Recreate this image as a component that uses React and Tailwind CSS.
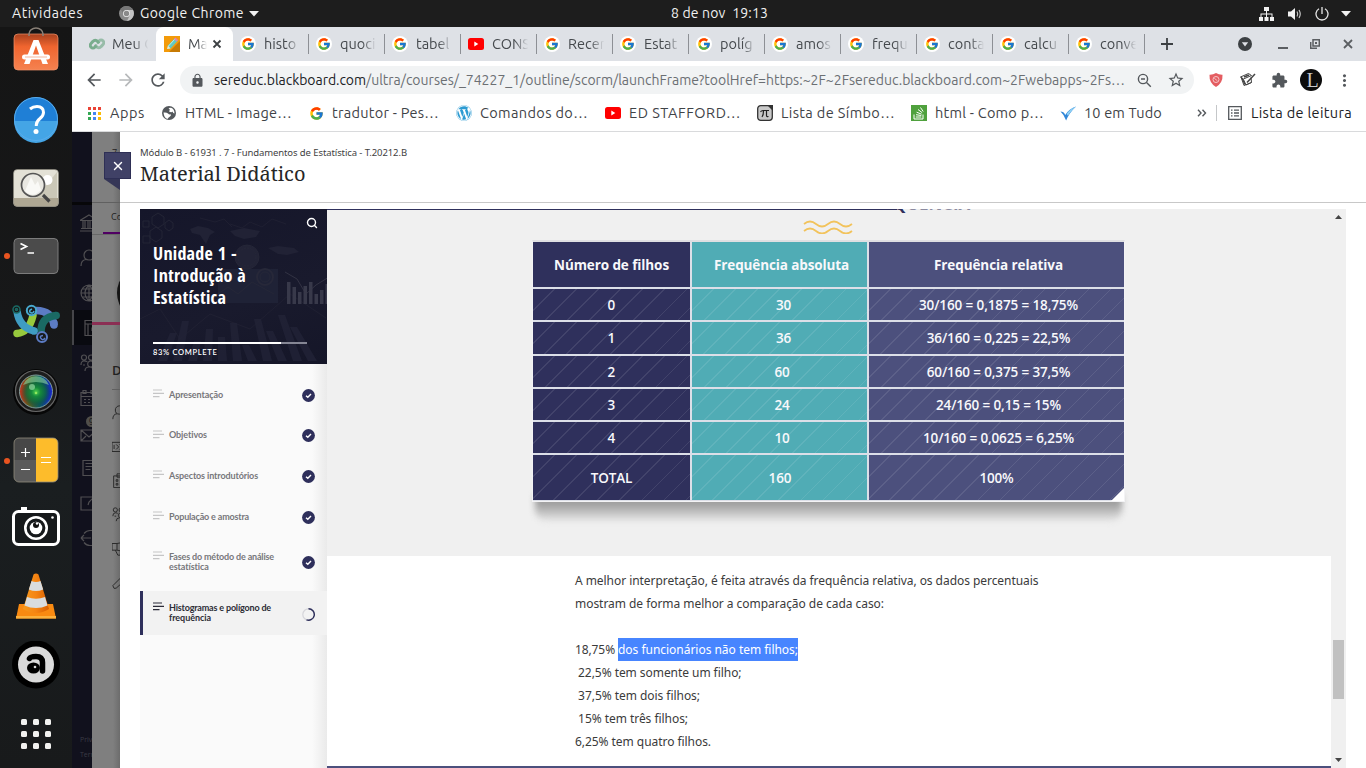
import React, { useLayoutEffect, useRef } from "react";
import { FcGoogle } from "react-icons/fc";
import { FaWordpress } from "react-icons/fa";
import {
  MdArrowBack, MdArrowForward, MdRefresh, MdLock, MdStarOutline, MdExtension, MdMoreVert,
} from "react-icons/md";
import { Search, X } from "lucide-react";

/* Text that spreads its letters so that it takes exactly `w` pixels. */
function Fit({ w, className = "", children }) {
  const ref = useRef(null);
  useLayoutEffect(() => {
    const el = ref.current;
    const apply = () => {
      el.style.letterSpacing = "0px";
      const natural = el.getBoundingClientRect().width;
      el.style.letterSpacing = (w - natural) / el.textContent.length + "px";
    };
    apply();
    document.fonts?.ready.then(apply);
  }, [w]);
  return <span ref={ref} className={"inline-block whitespace-pre " + className}>{children}</span>;
}

const UI = "font-['Ubuntu','Noto_Sans',sans-serif]";

/* ---------- Desktop dock ---------- */

function Svg48({ children }) {
  return <svg width="48" height="48" viewBox="0 0 48 48" className="shrink-0">{children}</svg>;
}

function StoreIcon() {
  return (
    <Svg48>
      <defs><linearGradient id="store" x1="0" y1="0" x2="0" y2="1"><stop offset="0" stopColor="#a8421f" /><stop offset=".35" stopColor="#f0652f" /><stop offset="1" stopColor="#f58250" /></linearGradient></defs>
      <rect x="2" y="7" width="44" height="36" rx="4" fill="url(#store)" stroke="#f3936b" strokeWidth=".7" />
      <path d="M17 9V7a7 6 0 0 1 14 0v2" fill="none" stroke="#8a8178" strokeWidth="1.600" />
      <path d="M12 37 21.500 13h5L36 37h-5.500L24 18.500 17.500 37z" fill="#fff" />
      <rect x="10" y="27.500" width="28" height="5" rx="2.500" fill="#fff" />
      <path d="M13 30h22" stroke="#f5b89e" strokeWidth="1" />
    </Svg48>
  );
}
function HelpIcon() {
  return (
    <Svg48>
      <circle cx="24" cy="24" r="22" fill="#1f7fd6" />
      <path d="M2 26a22 22 0 0 0 44 0z" fill="#44a5e6" />
      <circle cx="24" cy="24" r="21.500" fill="none" stroke="#59aceb" />
      <path d="M18 14q3-2.500 7-2.500 6.500 0 6.500 6 0 3-3.500 6-3.700 3-3.700 6.500v1" fill="none" stroke="#fff" strokeWidth="3" />
      <circle cx="24" cy="36.500" r="2.500" fill="#fff" />
    </Svg48>
  );
}
function ViewerIcon() {
  return (
    <Svg48>
      <rect x="1.500" y="5.500" width="45" height="37" rx="4" fill="#e3e1d6" />
      <path d="M1.500 34h45v4.500a4 4 0 0 1-4 4h-37a4 4 0 0 1-4-4z" fill="#aea793" />
      <path d="M24 34 45 8v26z" fill="#cbc8b8" />
      <circle cx="35.500" cy="16" r="5" fill="#fff" />
      <circle cx="21" cy="21" r="11.500" fill="#e9e8e2" stroke="#555" strokeWidth="1.700" />
      <path d="m13 27 6-14 4 8 3-4 3 9q-8 9-16 1z" fill="#f9f9f6" />
      <path d="m31 31 6.500 6.500" stroke="#444" strokeWidth="3.200" />
      <rect x="1.500" y="5.500" width="45" height="37" rx="4" fill="none" stroke="#8e8b80" strokeWidth=".6" />
    </Svg48>
  );
}
function TerminalIcon() {
  return (
    <Svg48>
      <rect x="2" y="6.500" width="44" height="35" rx="4" fill="#4b4b4b" stroke="#7c7c7c" />
      <path d="m8.500 11.500 6 3-6 3" fill="none" stroke="#fff" strokeWidth="1.700" />
      <path d="M15.500 21H22" stroke="#fff" strokeWidth="1.500" />
    </Svg48>
  );
}
function KnotIcon() {
  return (
    <Svg48>
      <g fill="none" strokeLinecap="round" strokeWidth="7.500" transform="translate(0 2)">
        <path d="M5 31.500q12-1 16-18" stroke="#97c93d" />
        <path d="M24 8.500q16 0 18 15" stroke="#5c7cc4" strokeLinecap="butt" />
        <path d="M42 21v2" stroke="#5c7cc4" />
        <path d="M29 30q0-15 15-16.500" stroke="#1a6a64" strokeLinecap="butt" />
        <path d="M44 13.500h.2" stroke="#1a6a64" />
        <path d="M5 9q2 16 17 20" stroke="#3f9cc2" strokeLinecap="butt" />
        <path d="M22 29h.1" stroke="#3f9cc2" />
      </g>
      <g fill="#181a1b" strokeWidth="1.500" transform="translate(0 2)">
        <circle cx="4.500" cy="7.500" r="3.500" stroke="#1a6a64" /><circle cx="4.500" cy="7.500" r="1" stroke="#1a6a64" />
        <circle cx="19.500" cy="8.500" r="4.700" stroke="#48a9cf" strokeWidth="2" /><path d="M22 9q-1 3-3.500 1.500T20 7" stroke="#48a9cf" />
        <circle cx="30" cy="35" r="5" stroke="#5c7cc4" strokeWidth="2" /><path d="M33 36q-2 3-4 .5t2-3" stroke="#5c7cc4" />
      </g>
    </Svg48>
  );
}
function LensIcon() {
  return (
    <Svg48>
      <defs>
        <radialGradient id="lens"><stop offset="0" stopColor="#4fd04f" /><stop offset=".3" stopColor="#168a3c" /><stop offset=".65" stopColor="#0d6a3b" stopOpacity=".75" /><stop offset="1" stopColor="#0d3b3a" stopOpacity="0" /></radialGradient>
        <linearGradient id="lensHue"><stop offset="0" stopColor="#c4301c" /><stop offset=".3" stopColor="#58601f" /><stop offset=".6" stopColor="#0a5d60" /><stop offset="1" stopColor="#1622d0" /></linearGradient>
      </defs>
      <circle cx="24" cy="24" r="23" fill="#070707" />
      <circle cx="24" cy="23" r="20.500" fill="#1d1d1d" stroke="#666" strokeWidth="1.200" />
      <circle cx="24" cy="23.500" r="16.500" fill="url(#lensHue)" stroke="#7f9d9b" />
      <circle cx="24" cy="24" r="15" fill="url(#lens)" />
      <path d="M11 17a14 14 0 0 1 26 0q-13-6-26 0z" fill="#8bd69d" opacity=".6" />
      <circle cx="20" cy="19" r="3" fill="#a9eab3" opacity=".6" />
      <circle cx="24" cy="25" r="1.300" fill="#8de85d" />
    </Svg48>
  );
}
function CalcIcon() {
  return (
    <Svg48>
      <rect x="2" y="1" width="44" height="44" rx="5" fill="#5a5a5a" />
      <path d="M2 23V6a5 5 0 0 1 5-5h17v22z" fill="#474747" />
      <path d="M24 1h17a5 5 0 0 1 5 5v34a5 5 0 0 1-5 5H24z" fill="#fdbc2b" />
      <rect x="2" y="1" width="44" height="44" rx="5" fill="none" stroke="#918b7b" strokeWidth=".8" />
      <path d="M9 15.500h9M13.500 11v9M9 32.500h9M29 20.500h10M29 25.500h10" stroke="#fff" strokeWidth="1.200" />
    </Svg48>
  );
}
function CameraIcon() {
  return (
    <Svg48>
      <path d="M9 2h6v4H9z" fill="#fff" />
      <rect x="1.500" y="6.500" width="45" height="33" rx="5" fill="#16191b" stroke="#fff" strokeWidth="3" />
      <circle cx="24" cy="23" r="10.700" fill="none" stroke="#fff" strokeWidth="2.600" />
      <circle cx="24" cy="23" r="6.300" fill="#fff" /><circle cx="24" cy="20" r="3" fill="#111" /><circle cx="25" cy="18.500" r="1.200" fill="#fff" />
      <circle cx="40.500" cy="12.500" r="1.300" fill="#fff" />
    </Svg48>
  );
}
function ConeIcon() {
  return (
    <Svg48>
      <defs><linearGradient id="cone" x1="0" x2="1"><stop offset="0" stopColor="#f79a1c" /><stop offset=".5" stopColor="#f58413" /><stop offset="1" stopColor="#d95f00" /></linearGradient></defs>
      <path d="M7 31h34l3 14.500H4z" fill="#f98a11" /><path d="M4 43h40v2.500H4z" fill="#fcb13c" />
      <path d="M21.500 1.500q2.500-2 5 0L37 36q-13 8-26 0z" fill="url(#cone)" />
      <path d="M19.500 8q4.500 2 9 0l2.700 8.500q-7.200 3-14.400 0zM15 24q9 3.500 18 0l2.500 8.500q-11.500 5-23 0z" fill="#d9dcde" />
    </Svg48>
  );
}
function AIcon() {
  return (
    <Svg48>
      <circle cx="24" cy="23.500" r="24" fill="#000" /><circle cx="24" cy="23.500" r="18" fill="#dadada" />
      <path d="M17.500 17.500q1-2 6.500-2 6.500 0 6.500 6V30" fill="none" stroke="#000" strokeWidth="5.500" strokeLinecap="round" />
      <ellipse cx="21.500" cy="27" rx="6.500" ry="5.500" fill="#000" /><circle cx="23" cy="26" r="1.300" fill="#dadada" />
    </Svg48>
  );
}
function GridIcon() {
  const p = [9, 21, 33];
  return <Svg48>{p.map((x) => p.map((y) => <rect key={x + "-" + y} x={x} y={y} width="6" height="6" rx="1.500" fill="#f2f2f0" />))}</Svg48>;
}

const DOCK = [
  [StoreIcon], [HelpIcon], [ViewerIcon], [TerminalIcon, true], [KnotIcon], [LensIcon], [CalcIcon, true], [CameraIcon], [ConeIcon], [AIcon], [GridIcon],
];

function Dock() {
  return (
    <aside className="w-[72px] shrink-0 overflow-hidden bg-[linear-gradient(#151515,#171819_40%,#1a1e20_62%,#181a1b)]">
      <div className="-mt-[10px] flex flex-col">
        {DOCK.map(([Icon, running], i) => (
          <div key={i} className="flex h-[68.250px] shrink-0 items-center">
            <span className="flex w-3 justify-center pl-[2px]">{running && <span className="h-[6px] w-[6px] rounded-full bg-[#e95420]" />}</span>
            <Icon />
          </div>
        ))}
      </div>
    </aside>
  );
}

/* ---------- Browser ---------- */

function YouTube() {
  return <svg width="16" height="12" viewBox="0 0 16 12"><rect width="16" height="12" rx="2.500" fill="#f00" /><path d="M6.300 3.500v5l4-2.500z" fill="#fff" /></svg>;
}

const TABS = ["histo", "quoci", "tabel", "CONS", "Recer", "Estat", "políg", "amos", "frequ", "conta", "calcu", "conve"];
const FADE = "overflow-hidden whitespace-nowrap [mask-image:linear-gradient(to_right,#000_60%,transparent_98%)]";

function TabStrip() {
  return (
    <div className={"flex h-[34px] shrink-0 items-center bg-[#dee1e6] text-[14.500px] text-[#45494d] " + UI}>
      <div className="flex w-[84px] shrink-0 items-center pl-[17px]">
        <svg width="16" height="12" viewBox="0 0 16 12" fill="none" stroke="#79ad8d" strokeWidth="3"><path d="M7.500 7.500 5.800 9.200A2.500 2.500 0 0 1 2 5.500L4 3.300a2.800 2.800 0 0 1 4.500 0L10 5.500" /><path d="m8.500 4.500 1.700-1.700A2.500 2.500 0 0 1 14 6.500L12 8.700a2.800 2.800 0 0 1-4.500 0L6 6.500" opacity=".7" /></svg>
        <span className={"ml-[7px] w-[37px] " + FADE}>Meu C</span>
      </div>
      <div className="flex h-full w-[77px] shrink-0 items-center rounded-t-lg bg-white pl-2">
        <svg width="16" height="16" viewBox="0 0 16 16"><path fill="#f39a09" d="M0 0h16v16H0z" /><path d="M5 16 16 5v11z" fill="#c77a04" /><path d="m3 13 1-3.500L11 2l3 2.500-7.500 8z" fill="#62c8c0" /><path d="m3 13 1-3.500 2.500 3z" fill="#f6e6c4" /><path d="m10 3 1.500-1.500L14 4l-1.500 1.500z" fill="#eb7fa4" /><path d="m4.500 10 6-6.500" stroke="#b5efe9" /></svg>
        <span className="ml-2 w-[19px] overflow-hidden whitespace-nowrap [mask-image:linear-gradient(to_right,#000_50%,transparent)]">Ma</span>
        <svg width="10" height="10" viewBox="0 0 10 10" className="ml-[5px]" stroke="#3c4043" strokeWidth="1.800"><path d="m1.500 1.500 7 7m0-7-7 7" /></svg>
      </div>
      {TABS.map((t, i) => (
        <div key={t} className="flex h-[20px] w-[76px] shrink-0 items-center border-r border-[#8d9095] pl-[7px]">
          <span className="flex h-4 w-4 shrink-0 items-center justify-center">
            {i === 3 ? <YouTube /> : <span className="flex h-4 w-4 items-center justify-center rounded-full bg-white"><FcGoogle size={14} /></span>}
          </span>
          <span className={"ml-[8px] w-[37px] " + FADE}>{t}</span>
        </div>
      ))}
      <svg width="12" height="12" viewBox="0 0 12 12" className="ml-[16px]" stroke="#3c4043" strokeWidth="1.800"><path d="M6 0v12M0 6h12" /></svg>
      <svg width="14" height="14" viewBox="0 0 14 14" className="ml-[65px]"><circle cx="7" cy="7" r="7" fill="#3c4043" /><path d="M3.800 5.200h6.400L7 9.500z" fill="#dee1e6" /></svg>
      <svg width="10" height="12" viewBox="0 0 10 12" className="ml-[26px]"><path d="M0 9h10v2H0z" fill="#5b5e62" /></svg>
      <svg width="10" height="10" viewBox="0 0 10 10" className="ml-[22px]" fill="none" stroke="#5b5e62" strokeWidth="1.500"><path d="M3 .7h6.300V7H3zM.7 3v6.300H7" /><path d="M5 3h2v2H5z" fill="#5b5e62" stroke="none" /></svg>
      <svg width="10" height="10" viewBox="0 0 10 10" className="ml-[23px]" stroke="#5b5e62" strokeWidth="1.800"><path d="m1 1 8 8m0-8-8 8" /></svg>
    </div>
  );
}

function Toolbar() {
  return (
    <div className={"flex h-[38px] shrink-0 items-center bg-white text-[#54585c] " + UI}>
      <MdArrowBack size={20} className="ml-[12px]" />
      <MdArrowForward size={20} className="ml-[12px] text-[#b7b9bb]" />
      <MdRefresh size={20} className="ml-[12px]" />
      <div className="ml-[12px] flex h-7 w-[1014px] shrink-0 items-center rounded-full bg-[#f1f3f4] pl-[10px] text-[14px]">
        <MdLock size={15} className="text-[#54585c]" />
        <Fit w={152} className="ml-[9px] text-[#202124]">sereduc.blackboard.com</Fit>
        <Fit w={759} className="text-[#6b6f73]">/ultra/courses/_74227_1/outline/scorm/launchFrame?toolHref=https:~2F~2Fsereduc.blackboard.com~2Fwebapps~2Fs…</Fit>
        <svg width="15" height="15" viewBox="0 0 15 15" className="ml-[12px]" fill="none" stroke="#54585c" strokeWidth="1.400"><circle cx="6" cy="6" r="4.600" /><path d="m9.500 9.500 4.300 4.300M4 6h4" /></svg>
        <MdStarOutline size={18} className="ml-[15px]" />
      </div>
      <svg width="14" height="14" viewBox="0 0 14 14" className="ml-[15px] shrink-0"><path d="M7 0q3 2 6.500 1.800Q14 10 7 14 0 10 .5 1.800 4 2 7 0z" fill="#e45d61" /><circle cx="7" cy="6.500" r="3" fill="none" stroke="#f6c6c8" /><path d="m5.300 5.300 3 2.400" stroke="#f6c6c8" strokeWidth=".9" /></svg>
      <svg width="18" height="16" viewBox="0 0 18 16" className="ml-[16px] shrink-0" fill="none" stroke="#444" strokeWidth="1"><path d="m1.500 5 8-3.500 3 2-8 3.500zM2 5l3 8.500 7.500-3M4.500 7.500l2.500 5.500 5.500-2.500-.5-5" /><path d="m8 10.500 8-8.500" strokeWidth="1.500" /><path d="m3 6 3 6.500M5 5l5-2" strokeWidth="1.500" /></svg>
      <MdExtension size={17} className="ml-[14px] shrink-0" />
      <span className="ml-[12px] flex h-[22px] w-[22px] shrink-0 items-center justify-center rounded-full bg-[#0c0c0c] pl-[3px] font-['Liberation_Serif',serif] text-[20px] leading-none text-[#c9c9c9]">L</span>
      <MdMoreVert size={19} className="ml-[13px] shrink-0" />
    </div>
  );
}

function Bookmark({ w, tw, icon, children }) {
  return (
    <div className="flex shrink-0 items-center" style={{ width: w }}>
      <span className="mr-2 flex w-4 shrink-0 justify-center">{icon}</span>
      <Fit w={tw}>{children}</Fit>
    </div>
  );
}

function Bookmarks() {
  const dots = ["#ea4335", "#ea4335", "#ea4335", "#34a853", "#4285f4", "#fbbc05", "#34a853", "#4285f4", "#fbbc05"];
  return (
    <div className={"flex h-[33px] shrink-0 items-center border-b border-[#d9dadc] bg-white pb-[4px] pl-[14px] text-[14.500px] text-[#3f4347] " + UI}>
      <Bookmark w={75} tw={35} icon={<span className="grid grid-cols-3 gap-[2px]">{dots.map((c, i) => <i key={i} className="h-[3px] w-[3px]" style={{ background: c }} />)}</span>}>Apps</Bookmark>
      <Bookmark w={147} tw={107} icon={<svg width="14" height="14" viewBox="0 0 14 14"><circle cx="7" cy="7" r="7" fill="#54585c" /><path d="M1.500 6.500q3-.5 4.500 1t2.500.5q1 1.500-.5 2.500-2 1-2.500 2.500-3.500-1-4-6.500zM6.500 2q2 1.500 1 2.500t.5 1.500q2 .5 2.500-.5.500 2 2 2Q12.500 3 9 1.700z" fill="#fff" /></svg>}>HTML - Image…</Bookmark>
      <Bookmark w={148} tw={107} icon={<FcGoogle size={15} />}>tradutor - Pes…</Bookmark>
      <Bookmark w={149} tw={108} icon={<FaWordpress size={16} color="#2d9bd2" />}>Comandos do…</Bookmark>
      <Bookmark w={152} tw={112} icon={<YouTube />}>ED STAFFORD…</Bookmark>
      <Bookmark w={154} tw={114} icon={<svg width="16" height="16" viewBox="0 0 16 16"><rect x=".7" y=".7" width="14.600" height="14.600" rx="3" fill="#c9c9c9" stroke="#333" strokeWidth="1.300" /><path d="M10 0h6v6z" fill="#333" /><path d="M3.500 6.800q1-1.300 2.500-1.300h6M6.500 6q0 4-1.500 6M9.500 6v4.500q0 1.500 2 1" fill="none" stroke="#222" strokeWidth="1.200" /></svg>}>Lista de Símbo…</Bookmark>
      <Bookmark w={149} tw={109} icon={<svg width="16" height="16" viewBox="0 0 16 16"><path d="M0 0h16v16H0z" fill="#4fa13d" /><path d="M3 9.500V14h9V9.500M4.800 12h5.500M5 9.700l5.300.8M5.600 7.200l5 2M7 4.500l4.200 3.200M9.500 2.500l2.700 4" fill="none" stroke="#fff" /></svg>}>html - Como p…</Bookmark>
      <Bookmark w={137} tw={78} icon={<svg width="17" height="16" viewBox="0 0 17 16"><path d="M.5 6.500q3.500 0 5 3.500Q9 4 17 1 9.500 8 6.500 16 4.500 10 .5 6.500z" fill="#2f86d8" /><path d="M7 9Q10 4 17 1 11 6.500 8.500 11z" fill="#8ed0f5" /></svg>}>10 em Tudo</Bookmark>
      <svg width="10" height="8" viewBox="0 0 10 8" className="shrink-0" fill="none" stroke="#54585c" strokeWidth="1.400"><path d="m1 .8 3 3.200-3 3.200M5.500.8l3 3.200-3 3.200" /></svg>
      <span className="ml-[9px] h-4 w-px bg-[#c5c7c9]" />
      <svg width="14" height="14" viewBox="0 0 14 14" className="ml-[11px] shrink-0" fill="none" stroke="#54585c" strokeWidth="1.300"><path d="M.7.7h12.600v12.600H.7zM3 4.200h1.500M6 4.200h5M3 7h1.500M6 7h5M3 9.800h1.500M6 9.800h5" /></svg>
      <Fit w={101} className="ml-[9px] text-[#202124]">Lista de leitura</Fit>
    </div>
  );
}

/* ---------- Course page behind the panel ---------- */

const BANK = "M0 6.500 9 1l9 5.500zM1 14.500h16M0 17h18M3 7v7M5 7v7M8 7v7M10 7v7M13 7v7M15 7v7";
const PERSON = "M9 1a5 5 0 0 1 5 5q0 5-5 5T4 6a5 5 0 0 1 5-5zM1 17q0-6 5-6.500M17 17q0-6-5-6.500";
const GLOBE = "M9 1a8 8 0 1 0 0 16A8 8 0 0 0 9 1zM9 1q-8 8 0 16M9 1q8 8 0 16M9 1v16M1 9h16M2.500 5h13M2.500 13h13";
const BOOK = "M5 1.500h13v15H5zM5 5h13M8 5v11.500M12 8.500v3h3";
const GROUP = "M4 1a2.500 2.500 0 1 1 0 5 2.500 2.500 0 0 1 0-5zM11 1a2.500 2.500 0 1 1 0 5 2.500 2.500 0 0 1 0-5zM1 11q0-4 3-4t3 1M9 7.500a3 3 0 1 1 0 5 3 3 0 0 1 0-5M5 17q0-4 4-4t5 4M3 11h2";
const CALENDAR = "M1 3.500h16v13H1zM1 7.500h16M3 1.500h3v3H3zM11 1.500h3v3h-3zM4 10.500h2M8 10.500h2M12 10.500h2M4 13.500h2M8 13.500h2M12 13.500h2";
const MAIL = "M1 6h16v11H1zM1 6l8 7 8-7M1 17l5-5";
const SCROLL = "M3 16.500v-15h13v15zM3 12v4.500h9M5.500 4.500h8M5.500 7.500h8M5.500 10.500h5";
const EDIT = "M12 3H1v13h16V9M8 11l1-3 7-7";
const EXIT = "M4 4.500q2.500-3 6-3h3M1 9h10M1 9l3-3M1 9l3 3M4 13.500q2.500 3 6 3h3";
const NAV = [BANK, PERSON, GLOBE, BOOK, GROUP, CALENDAR, MAIL, SCROLL, EDIT, EXIT];

function LineIcon({ d, size, className }) {
  return <svg width={size} height={size} viewBox="0 0 18 18" fill="none" stroke="currentColor" strokeWidth="1.200" className={"shrink-0 " + className}><path d={d} /></svg>;
}

function NavRail() {
  return (
    <nav className="flex w-5 shrink-0 flex-col overflow-hidden bg-[#11111d] text-[#504f52]">
      <div className="h-[73px] border-b-[3px] border-[#070709]" />
      <div className="flex flex-col">
        {NAV.map((d, i) => (
          <div key={i} className={"relative flex h-[35px] w-5 items-center border-l-2 " + (i === 3 ? "border-[#454549] bg-[#090a10]" : "border-transparent")}>
            <LineIcon d={d} size={18} className="ml-[6px]" />
            {i === 6 && <span className="absolute left-[12px] top-[1px] h-[11px] w-[11px] rounded-full bg-[#504f4b] pl-[3px] text-[8px] leading-[11px] text-[#15151c]">9</span>}
          </div>
        ))}
      </div>
      <div className="mt-auto flex flex-col pb-[6px] pl-2 font-['Open_Sans',sans-serif] text-[7px] leading-[15px] text-[#3b3b45]">
        <span>Privacidade</span>
        <span>Termos</span>
      </div>
    </nav>
  );
}

const TICKET = "M0 4h18v11H0zM2.500 7v5M5 6.500l3 3-3 3M9 6.500l3 3-3 3";
const CLIP = "M2 3.500h14v14H2zM6 1h6v4H6zM5 8h2v2H5zM5 12.500h2v2H5zM10 9h4M10 13.500h4";
const HORN = "M0 3h6v8H0zM6 3l11-2v12L6 11M4 11l3 6h3V11";
const WRENCH = "M1 14 10 5q0-4 4-4l-2 4 2 2 4-2q0 4-4 4L5 17q-3 2-4-3z";
const DETAILS = [PERSON, TICKET, CLIP, GROUP, HORN, WRENCH];

function CourseStrip() {
  return (
    <div className="flex w-7 shrink-0 flex-col overflow-hidden bg-[linear-gradient(to_right,#7f7f7f_75%,#6c6c6c)] font-['Open_Sans',sans-serif] text-[#222]">
      <div className="h-[71px] shrink-0 border-b border-[#606060] pl-5 pt-[15px] text-[9px] leading-3">7</div>
      <div className="h-[32px] shrink-0 border-b border-[#686868] pl-[11px]">
        <div className="h-[31px] border-b-2 border-[#500063] pl-2 pt-[8px] text-[9px] leading-3">Conteúdo</div>
      </div>
      <div className="flex h-[87px] shrink-0 items-end overflow-hidden pl-[25px]"><span className="mb-[1px] h-[56px] w-[56px] shrink-0 rounded-full bg-[#141414]" /></div>
      <div className="h-[3px] shrink-0 bg-[#8b2f54]" />
      <div className="ml-5 h-[65px] shrink-0 whitespace-nowrap border-b border-[#606060] pt-[35px] text-[13px] font-semibold leading-5">Detalhes</div>
      <div className="flex flex-col pl-5 pt-[6px]">
        {DETAILS.map((d, i) => <div key={i} className="flex h-[33.800px] items-center"><LineIcon d={d} size={15} className="text-[#2c2c2c]" /></div>)}
      </div>
    </div>
  );
}

/* ---------- Lesson panel ---------- */

function HeroArt() {
  const bars = [22, 17, 12, 18, 22, 10, 14, 20];
  return (
    <svg width="187" height="155" viewBox="0 0 187 155" className="absolute inset-0" fill="none" stroke="#272839" strokeWidth=".8">
      <path d="m12 8 6-4 6 4v7l-6 4-6-4zM25 14l4-3 4 3v5l-4 3-4-3zM10 22l6-4 6 4v7l-6 4-6-4zM3 12h6v6H3zM3 27h7v7H3z" />
      <path d="m90 15 12 4 8-6 12 5 10-8 14 5M60 9l15 4 9-3 8 8M0 110l20-10 20 30 30-25 40 15 40-35 36 24" opacity=".6" />
      <path d="M78 60h60v34H78z" fill="#1f2236" stroke="none" />
      <circle cx="107" cy="48" r="12" fill="#222336" /><circle cx="107" cy="48" r="9" strokeDasharray="2 1" /><circle cx="125" cy="68" r="8" strokeWidth="2" /><circle cx="125" cy="68" r="5" />
      <path d="M78 94v-9l10-7 10 7 14-12 22 12" />
      <g fill="#212235" stroke="none">
        <path d="m50 20 8-3 10 2 7 4-5 3-4 9-6-9-8-2zM90 22l14-3 16 3-4 6-12 2-9-3zM128 39l10-2 16 2 5 4-12 3-9-1z" />
        {bars.map((h, i) => <path key={i} d={`M${147 + i * 5.500} 95v${-h}h3.500V95z`} fill="#38394a" />)}
      </g>
      <path d="m145 63 12 7 9 15 10-9 13-8" stroke="#383949" />
      <g fill="#222337" stroke="none" opacity=".8">
        {[28, 40, 20, 32, 24, 38, 16, 42, 30, 46, 34].map((h, i) => <path key={i} d={`M${18 + i * 15} 152 ${30 + i * 12} ${152 - h}h7L${27 + i * 15} 152z`} />)}
      </g>
    </svg>
  );
}

const LESSONS = [
  { lines: [["Apresentação", 54]], h: 41 },
  { lines: [["Objetivos", 38]], h: 40 },
  { lines: [["Aspectos introdutórios", 89]], h: 41 },
  { lines: [["População e amostra", 80]], h: 41 },
  { lines: [["Fases do método de análise", 105], ["estatística", 40]], h: 50 },
  { lines: [["Histogramas e polígono de", 102], ["frequência", 42]], h: 44, active: true },
];

function Lesson({ item }) {
  const a = item.active;
  return (
    <div
      className={"flex shrink-0 items-center pl-[13px] pr-[12.500px] font-bold " + (a ? "mt-[4px] bg-[#f2f2f2] text-[#2d2d36] shadow-[inset_3px_0_0_#2e2f5b]" : "text-[#77777a]")}
      style={{ height: item.h }}
    >
      <svg width="11" height="9" viewBox="0 0 11 9" className={"shrink-0 " + (item.lines.length > 1 ? "-mt-[13px]" : "-mt-[2px]")} strokeWidth="1.200" stroke={a ? "#2b2b38" : "#c5c5c6"}><path d="M0 1h9M0 4.300h11M0 7.600h6.500" /></svg>
      <div className="ml-[5px] flex flex-1 flex-col items-start text-[9px] leading-[10px]">
        {item.lines.map(([t, w]) => <Fit key={t} w={w}>{t}</Fit>)}
      </div>
      {a ? (
        <svg width="13" height="13" viewBox="0 0 13 13" fill="none" strokeWidth="1.200" className="mt-[2px]"><circle cx="6.500" cy="6.500" r="5.700" stroke="#d5d5da" /><path d="M6.500.8a5.700 5.700 0 1 1-2 11" stroke="#2e2f5b" strokeWidth="1.400" /></svg>
      ) : (
        <svg width="13" height="13" viewBox="0 0 13 13" fill="none" className="mt-[1px]"><circle cx="6.500" cy="6.500" r="6.400" fill="#2e2f5b" /><path d="m4 6.700 1.800 1.600L9 5" stroke="#fff" strokeWidth="1.400" /></svg>
      )}
    </div>
  );
}

function LessonSidebar() {
  return (
    <aside className="flex w-[187px] shrink-0 flex-col bg-[linear-gradient(to_right,#fafafa_92%,#eaeaea)] font-['Lato',sans-serif]">
      <div className="relative h-[155px] shrink-0 overflow-hidden bg-[linear-gradient(160deg,#15162a,#191a2d_60%,#151628)]">
        <HeroArt />
        <div className="relative flex h-full flex-col px-[13px] text-white">
          <Search size={12} strokeWidth={2.800} className="ml-auto mr-[-4px] mt-[8px] shrink-0" />
          <h2 className="mt-[13px] flex w-[150px] flex-col items-start font-['Open_Sans_Condensed','Open_Sans',sans-serif] text-[18px] font-bold leading-[22px] [font-stretch:75%]">
            <Fit w={84}>Unidade 1 -</Fit>
            <Fit w={93}>Introdução à</Fit>
            <Fit w={73}>Estatística</Fit>
          </h2>
          <div className="mt-[34px] flex h-[2px] w-[154px] bg-[#858694]"><span className="w-[83%] bg-white" /></div>
          <Fit w={64.500} className="mt-[4px] self-start text-[7.500px] font-semibold leading-[10px]">83% COMPLETE</Fit>
        </div>
      </div>
      <div className="flex flex-col pt-[10px]">
        {LESSONS.map((l, i) => <Lesson key={i} item={l} />)}
      </div>
    </aside>
  );
}

/* Each cell: text, width, horizontal shift of its centre. */
const ROWS = [
  [["Número de filhos", 115, 0], ["Frequência absoluta", 135, 4], ["Frequência relativa", 129, 4]],
  [["0", 8, 0], ["30", 15, 8], ["30/160 = 0,1875 = 18,75%", 159, 4]],
  [["1", 8, 0], ["36", 15, 8], ["36/160 = 0,225 = 22,5%", 143.500, 4]],
  [["2", 8, 0], ["60", 15, 5], ["60/160 = 0,375 = 37,5%", 143.500, 4]],
  [["3", 8, 0], ["24", 15, 5], ["24/160 = 0,15 = 15%", 125, 4]],
  [["4", 8, 0], ["10", 15, 5], ["10/160 = 0,0625 = 6,25%", 151, 4]],
  [["TOTAL", 41.500, 0], ["160", 23, 1], ["100%", 34, 0]],
];
const COLS = ["bg-[#2f305c]", "bg-[#50acb5]", "bg-[#4c507d]"];
const STRIPES = " bg-[repeating-linear-gradient(135deg,transparent_0_14.600px,rgba(255,255,255,.09)_14.600px_15.600px)]";

function FrequencyTable() {
  return (
    <div className="relative">
      <div className="absolute inset-x-[3px] bottom-[-19px] h-[26px] rounded-b-xl bg-[linear-gradient(#9c9c9c_30%,#e6e6e6)] blur-[3px]" />
      <div className="relative grid h-[262px] w-[593px] grid-cols-[157px_175px_255px] grid-rows-[45px_repeat(5,31.300px)_44.500px] gap-[2px] border border-t-2 border-[#f3f3f5] border-t-[#dfdfe2] bg-[#dcdfe8] font-['Open_Sans',sans-serif] text-[13.500px] text-[#f8f8fb]">
        {ROWS.map((r, i) => r.map(([t, w, shift], j) => (
          <div
            key={i + "-" + j}
            className={"flex items-center justify-center " + COLS[j] + (i ? STRIPES + " pt-px font-semibold" : " pt-[2px] font-bold")}
            style={{ paddingLeft: shift }}
          >
            <Fit w={w}>{t}</Fit>
          </div>
        )))}
        <svg width="13" height="13" viewBox="0 0 13 13" className="absolute bottom-0 right-0"><path d="M13 0v13H0z" fill="#fff" /></svg>
      </div>
    </div>
  );
}

function LessonBody() {
  return (
    <main className="flex min-w-0 flex-1 flex-col">
      <section className="flex h-[347px] shrink-0 flex-col items-start bg-[#f0f0f0]">
        <div className="flex h-[5px] w-full items-start overflow-hidden">
          <span className="h-[1px] w-[570px] bg-[#2f305c]" />
          <Fit w={77} className="-mt-[16px] ml-[-4px] font-['Open_Sans',sans-serif] text-[17px] font-bold leading-[22px] text-[#8b8ba0]"><span className="text-[#2f305c]">Q</span>UÊNCIA</Fit>
        </div>
        <svg width="50" height="14" viewBox="0 0 50 14" className="ml-[476px] mt-[6px] shrink-0" fill="none" stroke="#f2c35c" strokeWidth="1.700"><path d="M1 4q6-5 12 0t12 0 12 0 12 0M1 11q6-5 12 0t12 0 12 0 12 0" /></svg>
        <div className="ml-[205px] mt-[6px]"><FrequencyTable /></div>
      </section>
      <section className="flex flex-1 flex-col items-start border-b-2 border-[#4c507d] bg-white pl-[248px] pt-[13px] font-['Noto_Sans',sans-serif] text-[12px] leading-[23px] text-[#3b3b3b]">
        <Fit w={463.500}>A melhor interpretação, é feita através da frequência relativa, os dados percentuais</Fit>
        <Fit w={309}>mostram de forma melhor a comparação de cada caso:</Fit>
        <div className="mt-[23px] flex">
          <Fit w={43}>18,75% </Fit>
          <Fit w={180} className="bg-[#4785ff] text-white">dos funcionários não tem filhos;</Fit>
        </div>
        <Fit w={166.500}> 22,5% tem somente um filho;</Fit>
        <Fit w={125}> 37,5% tem dois filhos;</Fit>
        <Fit w={113}> 15% tem três filhos;</Fit>
        <Fit w={136}>6,25% tem quatro filhos.</Fit>
      </section>
    </main>
  );
}

function ScrollBar() {
  return (
    <div className="flex w-[15px] shrink-0 flex-col items-center bg-[#f0f0f0]">
      <svg width="7" height="4" viewBox="0 0 7 4" className="mt-[6px]"><path d="M3.500 0 7 4H0z" fill="#454545" /></svg>
      <span className="mt-[421px] h-[59px] w-[11px] bg-[#c1c1c1]" />
      <svg width="7" height="4" viewBox="0 0 7 4" className="mb-[6px] mt-auto"><path d="M3.500 4 7 0H0z" fill="#454545" /></svg>
    </div>
  );
}

function LessonPanel() {
  return (
    <div className="relative flex min-w-0 flex-1 flex-col bg-white">
      <div className="absolute -left-4 top-5 z-10">
        <div className="flex h-[27px] w-[27px] items-center justify-center border border-[#2e2f55] bg-[#404166]"><X size={14} strokeWidth={2.400} color="#fff" /></div>
        <svg width="16" height="11" viewBox="0 0 16 11" className="block"><path d="M0 0h16v11z" fill="#353657" /></svg>
      </div>
      <header className="flex h-[71px] shrink-0 flex-col items-start border-b border-[#c8c8c8] pl-5 pt-[14px]">
        <Fit w={267} className="font-['Noto_Sans',sans-serif] text-[9.500px] leading-[14px] text-[#3f3f3f]">Módulo B - 61931 . 7 - Fundamentos de Estatística - T.20212.B</Fit>
        <Fit w={165.500} className="font-['Noto_Serif','DejaVu_Serif_Condensed','DejaVu_Serif',serif] text-[20px] leading-[28px] text-[#262626]">Material Didático</Fit>
      </header>
      <div className="flex min-h-0 flex-1 pl-5 pr-5 pt-[6px]">
        <LessonSidebar />
        <LessonBody />
        <ScrollBar />
      </div>
    </div>
  );
}

export default function App() {
  return (
    <div className="flex h-[768px] w-[1366px] flex-col overflow-hidden bg-[#1d1d1d]">
      <div className={"flex h-[27px] shrink-0 items-center text-[14px] text-[#f1f1f1] " + UI}>
        <Fit w={71} className="ml-[12px]">Atividades</Fit>
        <svg width="15" height="15" viewBox="0 0 15 15" className="ml-[36px]"><circle cx="7.500" cy="7.500" r="7.500" fill="#8b8b8b" /><path d="M7.500 4H14A7.500 7.500 0 0 1 8 15l3-6z" fill="#c4c4c4" /><path d="M1.500 3A7.500 7.500 0 0 1 14 4H7.500L4.500 8z" fill="#777" /><circle cx="7.500" cy="7.500" r="3.500" fill="#eee" /><circle cx="7.500" cy="7.500" r="2.700" fill="#8a8a8a" /></svg>
        <Fit w={104} className="ml-[6px]">Google Chrome</Fit>
        <svg width="10" height="6" viewBox="0 0 10 6" className="ml-[5px]"><path d="M0 0h10L5 5.500z" fill="#f1f1f1" /></svg>
        <Fit w={97} className="ml-[412px]">8 de nov  19:13</Fit>
        <svg width="15" height="14" viewBox="0 0 15 14" className="ml-[491px]" fill="#f1f1f1"><path d="M5 0h5v4H5zM0 10h4v4H0zM5.500 10h4v4h-4zM11 10h4v4h-4zM7 4h1v3H7zM1.500 6.500h12v1h-12zM1.500 7h1v3h-1zM7 7h1v3H7zM12.500 7h1v3h-1z" /></svg>
        <svg width="15" height="14" viewBox="0 0 15 14" className="ml-[14px]"><path d="M0 4.500h3L7 1v12L3 9.500H0z" fill="#f1f1f1" /><path d="M9 4.500q1.500 2.500 0 5M11 3q2.500 4 0 8" fill="none" stroke="#d0d0d0" strokeWidth="1.100" /></svg>
        <svg width="14" height="14" viewBox="0 0 14 14" className="ml-[12px]" fill="none" stroke="#e6e6e6" strokeWidth="1.300"><path d="M7 0v7M4 1.800a6 6 0 1 0 6 0" /></svg>
        <svg width="10" height="6" viewBox="0 0 10 6" className="ml-[12px]"><path d="M0 0h10L5 5.500z" fill="#f1f1f1" /></svg>
      </div>
      <div className="flex min-h-0 flex-1">
        <Dock />
        <div className="flex min-w-0 flex-1 flex-col bg-white">
          <TabStrip />
          <Toolbar />
          <Bookmarks />
          <div className="flex min-h-0 flex-1">
            <NavRail />
            <CourseStrip />
            <LessonPanel />
          </div>
        </div>
      </div>
    </div>
  );
}
